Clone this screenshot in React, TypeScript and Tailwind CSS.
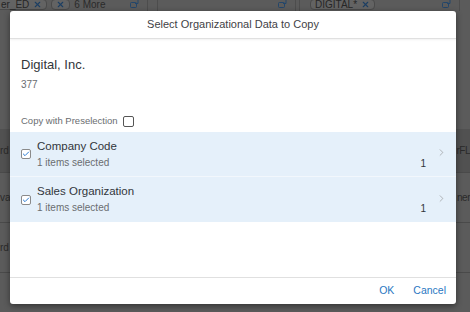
import React from 'react';
import { ChevronRight, Check, X } from 'lucide-react';

const font = { fontFamily: '"Liberation Sans", Arial, sans-serif' };

function ValueHelp() {
  return (
    <svg width="11" height="10" viewBox="0 0 11 10" className="text-[#23466b]">
      <rect x="0.5" y="3.5" width="6" height="5" rx="1" fill="none" stroke="currentColor" />
      <path d="M8 0.5v4H5" fill="none" stroke="currentColor" />
    </svg>
  );
}

function Token({ label }: { label: string }) {
  return (
    <div className="flex items-center gap-1 h-[11px] px-1 rounded-sm border border-[#4a4a4a] bg-[#636363] text-[10px] text-[#262626]">
      {label && <span>{label}</span>}
      <X size={9} strokeWidth={3} className="text-[#1d3f63]" />
    </div>
  );
}

function SelRow({ title }: { title: string }) {
  return (
    <div className="flex items-center h-[45px] pl-[11px] pr-[9px] border-b border-[#f2f7fc] last:border-b-0">
      <div className="w-[10px] h-[10px] rounded-[2px] border border-[#8a8a8a] bg-white flex items-center justify-center">
        <Check size={8} strokeWidth={3} className="text-[#2b7cd3]" />
      </div>
      <div className="ml-[6px] flex-1 flex flex-col -mt-[1px]">
        <span className="text-[11.5px] leading-[14px] text-[#32363a]">{title}</span>
        <span className="mt-[4px] text-[10px] leading-[12px] text-[#6a6d70]">1 items selected</span>
      </div>
      <span className="mt-[18px] text-[10px] text-[#32363a] mr-[10px]">1</span>
      <ChevronRight size={11} strokeWidth={1.3} className="text-[#8d8d8d] -mt-[3px]" />
    </div>
  );
}

export default function App() {
  return (
    <div style={font} className="relative w-[470px] h-[312px] overflow-hidden bg-[#5b5b5b]">
      {/* dimmed page underneath */}
      <div className="flex h-[12px] items-start -mt-[3px]">
        <div className="w-[148px] h-[14px] flex items-center gap-[4px] border-r border-[#4d4d4d] pr-[6px]">
          <div className="-ml-[4px]"><Token label="er_ED" /></div>
          <Token label="" />
          <span className="text-[10px] text-[#2a2a2a]">6 More</span>
          <div className="ml-auto"><ValueHelp /></div>
        </div>
        <div className="w-[10px] h-[14px] border-r border-[#4d4d4d]" />
        <div className="w-[138px] h-[14px] flex items-center justify-end pr-[6px] border-r border-[#4d4d4d]">
          <ValueHelp />
        </div>
        <div className="w-[4px] h-[14px] border-r border-[#4d4d4d]" />
        <div className="flex-1 h-[14px] flex items-center pl-[10px] pr-[6px] border-r border-[#4d4d4d]">
          <Token label="DIGITAL*" />
          <div className="ml-auto"><ValueHelp /></div>
        </div>
        <div className="w-[10px] h-[14px]" />
      </div>
      <div className="mt-[120px] flex flex-col text-[10px] text-[#2a2a2a]">
        <div className="h-[44px] bg-[#515151] border-b border-[#4a4a4a] flex items-center justify-between">
          <span>rd</span>
          <span className="tracking-tighter">rFL</span>
        </div>
        <div className="h-[50px] border-b border-[#4a4a4a] flex items-center justify-between">
          <span>va</span>
          <span className="tracking-tighter">ner</span>
        </div>
        <div className="h-[50px] border-b border-[#4a4a4a] flex items-center">
          <span>rd</span>
        </div>
      </div>

      {/* dialog */}
      <div className="absolute left-[10px] top-[11px] w-[446px] h-[293px] bg-white rounded-[3px] shadow-[0_2px_6px_rgba(0,0,0,0.45)] flex flex-col overflow-hidden">
        <div className="h-[28px] flex items-center justify-center border-b border-[#e0e0e0] shadow-[0_1px_2px_rgba(0,0,0,0.06)]">
          <span className="text-[11px] text-[#3f4246]">Select Organizational Data to Copy</span>
        </div>
        <div className="flex-1 flex flex-col">
          <div className="px-[11px] pt-[18px]">
            <div className="text-[13px] leading-[16px] text-[#32363a]">Digital, Inc.</div>
            <div className="mt-[6px] text-[10px] leading-[12px] text-[#6a6d70]">377</div>
            <div className="mt-[23px] flex items-center gap-[5px]">
              <span className="text-[9.5px] text-[#6a6d70]">Copy with Preselection</span>
              <div className="w-[11px] h-[11px] rounded-[2px] border border-[#555] bg-white" />
            </div>
          </div>
          <div className="mt-[4px] bg-[#e5f0fa] flex flex-col">
            <SelRow title="Company Code" />
            <SelRow title="Sales Organization" />
          </div>
        </div>
        <div className="h-[27px] border-t border-[#e0e0e0] flex items-center justify-end gap-[19px] pr-[10px] text-[10.5px] text-[#2a78c2]">
          <span>OK</span>
          <span>Cancel</span>
        </div>
      </div>
    </div>
  );
}
